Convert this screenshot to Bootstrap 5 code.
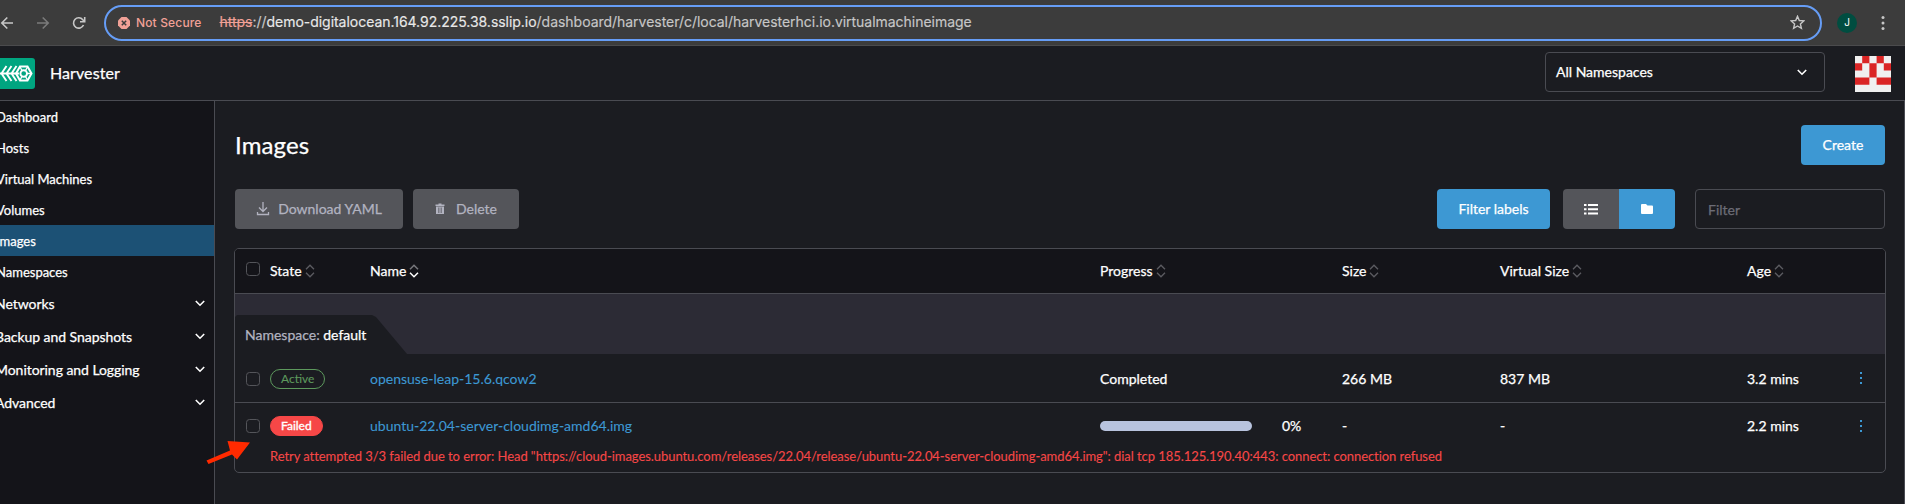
<!DOCTYPE html>
<html lang="en" data-bs-theme="dark">
<head>
<meta charset="utf-8">
<title>Harvester - Images</title>
<link rel="stylesheet" href="https://cdn.jsdelivr.net/npm/bootstrap@5.3.0/dist/css/bootstrap.min.css">
<style>
:root{--line:#4a4b52;--body:#1b1c21;--nav:#141419;--blue:#3d98d3;--grey:#54555a}
body{font-family:Lato,"Liberation Sans",sans-serif;font-size:14px;line-height:21px;background:var(--body);color:#fff;height:504px;overflow:hidden;-webkit-text-stroke:.25px}
svg{display:block;flex:none}
.browser{height:46px;background:#3c3c3c;border-bottom:1px solid #4b4b4d;font-family:Inter,"Liberation Sans",sans-serif;-webkit-text-stroke:0}
.addr{margin-left:18px;width:1718px;height:36px;border:2px solid #669df6;border-radius:18px;padding:0 15px 0 12px}
.insecure{color:#f1a197;font-size:12px;font-weight:500;margin-left:6px;letter-spacing:.15px;padding-bottom:1px}
.url{font-size:14px;color:#c7c7c7;margin-left:18px;letter-spacing:-.03px;padding-bottom:2px;-webkit-text-stroke:.15px}
.url b{font-weight:400;color:#e8e8e8}
.url s{color:#f1a197}
.profile{width:20px;height:20px;background:#004d40;font-size:10px;margin-left:15px}
.topbar{height:55px;border-bottom:1px solid var(--line);padding-bottom:2px}
.logo{margin-top:2px}
.product{font-size:16px;margin-left:15px;letter-spacing:.08px}
.ns{width:280px;height:40px;border:1px solid var(--line);border-radius:4px;padding:0 17px 0 10px;margin-right:30px}
.ns span{padding-bottom:1px}
.avatar{margin:3px 14px 0 0}
.side{width:215px;background:var(--nav);border-right:1px solid var(--line)}
.side .nav-link{height:31px;padding:2px 0 0;color:#fff;text-indent:-4px;white-space:nowrap;font-size:13px}
.side .nav-link.group{height:33px;padding:0 9px 0 0;font-size:14px;text-indent:-5px;letter-spacing:-.05px}
.side .nav-link.active{background:#1c5175}
.page{padding:24px 18px 0 19px;border-right:1px solid var(--line);height:403px}
h1{font-size:24px;line-height:40px;margin:0 0 0 1px;font-weight:400;letter-spacing:.12px}
.btn{height:40px;border:0;border-radius:4px;font-size:14px;padding:0;line-height:40px;white-space:nowrap;background:var(--blue);color:#fff;display:flex;align-items:center;justify-content:center}
.btn.muted{background:var(--grey);color:#b2b3c0}
.create{width:84px}
.dl{width:168px}
.del{width:106px;margin-left:10px;gap:11px}
.fl{width:113px}
.tools{margin:24px 1px 19px 1px}
.viewmode{margin-left:13px}
.viewmode .btn{width:56px}
.viewmode .btn+.btn{margin-left:0!important}
.form-control.find{width:190px;height:40px;border:1px solid var(--line);border-radius:4px;background:transparent;font-size:14px;padding:1px 12px 0;margin-left:20px}
.find::placeholder{color:#6c6c76}
.frame{border:1px solid var(--line);border-radius:5px;overflow:hidden;height:225px}
.frame table{table-layout:fixed;width:100%;border-collapse:separate;border-spacing:0}
.frame td,.frame th{padding:0;font-weight:400;vertical-align:middle;white-space:nowrap}
thead th{height:45px;background:var(--nav);border-bottom:1px solid var(--line)}
thead .d-flex{gap:3px;padding-bottom:1px}
thead svg{margin-top:1px}
.band td{height:60px;background:#2c2b35;vertical-align:bottom}
.tab{width:172px;height:39px;padding:5px 0 0 10px;color:#b2b3c0;line-height:29px;background:var(--body);clip-path:polygon(0 2px,2px 0,137px 0,141px 2px,172px 100%,0 100%)}
.tab span{color:#fff}
.r1 td{height:49px;border-bottom:1px solid var(--line)}
.r2 td{height:46px;line-height:20px;padding-bottom:1px}
.form-check-input{display:block;width:14px;height:14px;margin:0 0 0 11px;border:1px solid #54555a;border-radius:3px;background:transparent;min-height:0}
thead .form-check-input{margin-bottom:4px}
.r1 .form-check-input,.r2 .form-check-input,.r2 .state,.r2 .progress{margin-top:1px}
.state{display:block;width:max-content;height:20px;border:1px solid #5d995d;border-radius:10px;color:#5d995d;font-size:12px;line-height:17px;padding:0 10px;-webkit-text-stroke:.1px}
.r1 .state{margin-top:1px}
.state.failed{background:#f64747;border-color:#f64747;color:#fff;-webkit-text-stroke:.35px}
.frame a{color:var(--blue);text-decoration:none;-webkit-text-stroke:.1px}
.progress{width:152px;height:10px;border-radius:5px;background:#b8c3de}
.pct{margin-left:30px}
.err td{height:23px;vertical-align:top;color:#f64747;line-height:14px;-webkit-text-stroke:.1px}
.err div{font-size:13px;letter-spacing:-.058px}
.pointer{position:absolute;left:206px;top:440px}
</style>
<script src="https://cdn.jsdelivr.net/npm/bootstrap@5.3.0/dist/js/bootstrap.bundle.min.js"></script>
</head>
<body>
<svg width="0" height="0" class="position-absolute">
<symbol id="sort" viewBox="0 0 10 14"><path d="M1 5.2 5 1.2 9 5.2M1 8.800 5 12.800 9 8.800" fill="none" stroke="#5c5c62" stroke-width="1.3"/></symbol>
<symbol id="down" viewBox="0 0 10 7"><path d="M.8 1 5 5.2 9.2 1" fill="none" stroke="#fff" stroke-width="1.6"/></symbol>
<symbol id="dots" viewBox="0 0 3 14"><path d="M0 1h2v2H0zM0 6h2v2H0zM0 11h2v2H0z" fill="#3d98d3"/></symbol>
</svg>
<div class="browser d-flex align-items-center">
  <svg width="86" height="14" viewBox="0 0 86 14" fill="none" stroke-width="1.6"><path d="M13 7H2M7.300 1.500 1.800 7l5.500 5.500" stroke="#c7c7c7"/><path d="M37 7h11M42.700 1.500 48.200 7l-5.500 5.500" stroke="#7b7b7b"/><path d="M83.500 9A5.200 5.200 0 1 1 82.800 3.700L84.500 5.500M84.700 1v4.700H80" stroke="#c7c7c7"/></svg>
  <div class="addr d-flex align-items-center">
    <svg width="12" height="12" viewBox="0 0 12 12"><path d="M3.500 0h5L12 3.500v5L8.500 12h-5L0 8.500v-5z" fill="#f1a197"/><path d="M3.800 3.800l4.400 4.400M8.200 3.800 3.800 8.200" stroke="#3c3c3c" stroke-width="1.500"/></svg>
    <span class="insecure">Not Secure</span>
    <span class="url"><s>https</s>://<b>demo-digitalocean.164.92.225.38.sslip.io</b>/dashboard/harvester/c/local/harvesterhci.io.virtualmachineimage</span>
    <svg class="ms-auto" width="15" height="15" viewBox="0 0 15 15"><path d="M7.500 1.300 9.300 5.500l4.500.4-3.400 3 1 4.500-3.900-2.400-3.900 2.400 1-4.500-3.400-3 4.500-.4z" fill="none" stroke="#c7c7c7" stroke-width="1.400"/></svg>
  </div>
  <div class="profile rounded-circle d-flex align-items-center justify-content-center">J</div>
  <svg class="ms-4" width="4" height="14" viewBox="0 0 4 14" fill="#c7c7c7"><circle cx="2" cy="1.600" r="1.500"/><circle cx="2" cy="7" r="1.500"/><circle cx="2" cy="12.400" r="1.500"/></svg>
</div>
<header class="topbar d-flex align-items-center">
  <svg class="logo" width="35" height="31" viewBox="0 0 35 31"><path d="M0 0h32q3 0 3 3v25q0 3-3 3H0z" fill="#00a580"/><g fill="none" stroke="#fff" stroke-width="1.900"><path d="M0 15.500h19M6.500 8 1.500 15.500l5 7.500M11.500 8l-5 7.500 5 7.500M16.500 8l-5 7.500 5 7.500"/><path d="M20 8.500h7.500l4 7-4 7H20l-4-7z" stroke-width="2"/><circle cx="23.700" cy="15.500" r="3.300"/><path d="M20 9l2 3.500M27.500 9l-2 3.500M31 15.500h-4M20 22l2-3.500M27.500 22l-2-3.500" stroke-width="1.400"/></g></svg>
  <span class="product">Harvester</span>
  <div class="ns d-flex align-items-center justify-content-between ms-auto"><span>All Namespaces</span><svg width="10" height="7"><use href="#down"/></svg></div>
  <svg class="avatar" width="36" height="36" viewBox="0 0 36 36"><path d="M0 0h36v36H0z" fill="#f0f0f0"/><path d="M7.200 0h7.200v7.200H7.200zM21.600 0h7.200v7.200h-7.200zM0 7.200h7.200v7.200H0zM14.400 7.200h7.200v14.400h-7.200zM28.800 7.200H36v7.200h-7.200zM0 21.600h14.400v7.200H0zM21.600 21.600H36v7.200H21.600z" fill="#da2525"/></svg>
</header>
<div class="d-flex">
  <nav class="side nav flex-column flex-nowrap flex-shrink-0">
    <a class="nav-link d-flex align-items-center">Dashboard</a>
    <a class="nav-link d-flex align-items-center">Hosts</a>
    <a class="nav-link d-flex align-items-center">Virtual Machines</a>
    <a class="nav-link d-flex align-items-center">Volumes</a>
    <a class="nav-link active d-flex align-items-center">Images</a>
    <a class="nav-link d-flex align-items-center">Namespaces</a>
    <a class="nav-link group d-flex align-items-center justify-content-between">Networks<svg width="10" height="7"><use href="#down"/></svg></a>
    <a class="nav-link group d-flex align-items-center justify-content-between">Backup and Snapshots<svg width="10" height="7"><use href="#down"/></svg></a>
    <a class="nav-link group d-flex align-items-center justify-content-between">Monitoring and Logging<svg width="10" height="7"><use href="#down"/></svg></a>
    <a class="nav-link group d-flex align-items-center justify-content-between">Advanced<svg width="10" height="7"><use href="#down"/></svg></a>
  </nav>
  <main class="page flex-grow-1">
    <div class="d-flex justify-content-between" style="margin-right:1px"><h1>Images</h1><button class="btn create">Create</button></div>
    <div class="tools d-flex">
      <button class="btn muted dl"><svg class="me-2" width="14" height="14" viewBox="0 0 14 14" fill="none" stroke="#b2b3c0" stroke-width="1.300"><path d="M7 0v9M3 5.500l4 4 4-4M1.500 10v2.500h11V10"/></svg>Download YAML</button>
      <button class="btn muted del"><svg width="10" height="12" viewBox="0 0 10 12"><path d="M.5 1.500h3V.5h3v1h3V3h-9zM1 3.500h8V11H1z" fill="#b2b3c0"/><path d="M3.500 4.500V10M5 4.500V10M6.500 4.500V10" stroke="#54555a" stroke-width=".6"/></svg>Delete</button>
      <button class="btn ms-auto fl">Filter labels</button>
      <div class="btn-group viewmode">
        <button class="btn muted"><svg width="14" height="11" viewBox="0 0 14 11" fill="#fff"><path d="M0 0h2.500v2H0zM4 0h10v2H4zM0 4.300h2.500v2H0zM4 4.300h10v2H4zM0 8.600h2.500v2H0zM4 8.600h10v2H4z"/></svg></button>
        <button class="btn"><svg width="12" height="10" viewBox="0 0 12 10"><path d="M1 0h4l1.500 1.500H11q1 0 1 1V9q0 1-1 1H1Q0 10 0 9V1q0-1 1-1z" fill="#fff"/></svg></button>
      </div>
      <input class="form-control find" placeholder="Filter">
    </div>
    <div class="frame">
      <table>
        <colgroup><col style="width:35px"><col style="width:100px"><col style="width:730px"><col style="width:242px"><col style="width:158px"><col style="width:247px"><col style="width:113px"><col></colgroup>
        <thead><tr>
          <th><input type="checkbox" class="form-check-input"></th>
          <th><div class="d-flex align-items-center">State<svg width="10" height="14"><use href="#sort"/></svg></div></th>
          <th><div class="d-flex align-items-center">Name<svg width="10" height="14" viewBox="0 0 10 14" fill="none" stroke-width="1.500"><path d="M1 5.200 5 1.200 9 5.200" stroke="#77777c"/><path d="M1 8.800 5 12.800 9 8.800" stroke="#fff"/></svg></div></th>
          <th><div class="d-flex align-items-center">Progress<svg width="10" height="14"><use href="#sort"/></svg></div></th>
          <th><div class="d-flex align-items-center">Size<svg width="10" height="14"><use href="#sort"/></svg></div></th>
          <th><div class="d-flex align-items-center">Virtual Size<svg width="10" height="14"><use href="#sort"/></svg></div></th>
          <th><div class="d-flex align-items-center">Age<svg width="10" height="14"><use href="#sort"/></svg></div></th>
          <th></th>
        </tr></thead>
        <tbody>
          <tr class="band"><td colspan="8"><div class="tab">Namespace: <span>default</span></div></td></tr>
          <tr class="r1">
            <td><input type="checkbox" class="form-check-input"></td><td><span class="state">Active</span></td>
            <td><a href="#">opensuse-leap-15.6.qcow2</a></td><td>Completed</td><td>266 MB</td><td>837 MB</td><td>3.2 mins</td>
            <td><svg width="3" height="14"><use href="#dots"/></svg></td>
          </tr>
          <tr class="r2">
            <td><input type="checkbox" class="form-check-input"></td><td><span class="state failed">Failed</span></td>
            <td><a href="#">ubuntu-22.04-server-cloudimg-amd64.img</a></td>
            <td><div class="d-flex align-items-center"><div class="progress"><div class="progress-bar" style="width:0%"></div></div><span class="pct">0%</span></div></td>
            <td>-</td><td>-</td><td>2.2 mins</td>
            <td><svg width="3" height="14"><use href="#dots"/></svg></td>
          </tr>
          <tr class="err"><td></td><td colspan="7"><div>Retry attempted 3/3 failed due to error: Head "https://cloud-images.ubuntu.com/releases/22.04/release/ubuntu-22.04-server-cloudimg-amd64.img": dial tcp 185.125.190.40:443: connect: connection refused</div></td></tr>
        </tbody>
      </table>
    </div>
  </main>
</div>
<svg class="pointer" width="46" height="26" viewBox="0 0 46 26"><path d="M.5 20.500 24 10.500 21.500 1 44 2.500 31 19.500 26 14.500 2.500 24z" fill="#ff2a00"/></svg>
</body>
</html>
